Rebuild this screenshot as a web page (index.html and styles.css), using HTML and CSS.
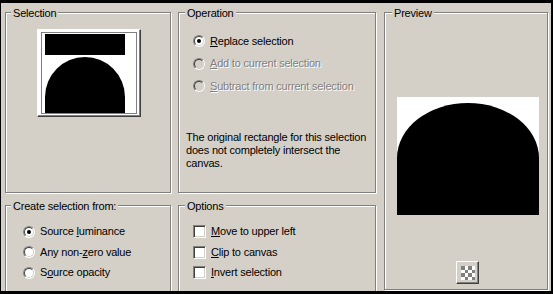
FILE: index.html
```html
<!DOCTYPE html>
<html>
<head>
<meta charset="utf-8">
<link rel="stylesheet" href="styles.css">
</head>
<body>
<div class="dialog">
  <div class="group sel">
    <span class="legend">Selection</span>
    <div class="thumb">
      <svg width="101" height="85" viewBox="0 0 101 85">
        <rect x="0" y="0" width="101" height="85" fill="#fff"/>
        <rect x="7" y="4" width="80" height="21" fill="#000"/>
        <path d="M7 83 V67 A40 40 0 0 1 87 67 V83 Z" fill="#000"/>
        <rect x="3.5" y="2.5" width="95" height="81" fill="none" stroke="#000" stroke-width="1" stroke-dasharray="1 1"/>
      </svg>
    </div>
  </div>

  <div class="group op">
    <span class="legend op-legend">Operation</span>
    <div class="op-rows">
      <div class="row row-op"><span class="radio checked"></span><span class="lbl"><u>R</u>eplace selection</span></div>
      <div class="row row-op disabled"><span class="radio"></span><span class="lbl"><u>A</u>dd to current selection</span></div>
      <div class="row row-op disabled"><span class="radio"></span><span class="lbl"><u>S</u>ubtract from current selection</span></div>
    </div>
    <p class="info">The original rectangle for this selection<br>does not completely intersect the<br>canvas.</p>
  </div>

  <div class="group preview">
    <span class="legend pv-legend">Preview</span>
    <div class="pv-box">
      <svg width="142" height="118" viewBox="0 0 142 118">
        <path d="M0 118 V61 A71 55 0 0 1 142 61 V118 Z" fill="#000"/>
      </svg>
    </div>
    <div class="pv-btn">
      <svg width="14" height="14" viewBox="0 0 4 4" shape-rendering="crispEdges">
        <rect x="0" y="0" width="4" height="4" fill="#fff"/>
        <rect x="0" y="0" width="1" height="1" fill="#808080"/>
        <rect x="2" y="0" width="1" height="1" fill="#808080"/>
        <rect x="1" y="1" width="1" height="1" fill="#808080"/>
        <rect x="3" y="1" width="1" height="1" fill="#808080"/>
        <rect x="0" y="2" width="1" height="1" fill="#808080"/>
        <rect x="2" y="2" width="1" height="1" fill="#808080"/>
        <rect x="1" y="3" width="1" height="1" fill="#808080"/>
        <rect x="3" y="3" width="1" height="1" fill="#808080"/>
      </svg>
    </div>
  </div>

  <div class="group create">
    <span class="legend">Create selection from:</span>
    <div class="list-rows create-rows">
      <div class="row row-sm"><span class="radio checked"></span><span class="lbl">Source <u>l</u>uminance</span></div>
      <div class="row row-sm"><span class="radio"></span><span class="lbl">Any non-<u>z</u>ero value</span></div>
      <div class="row row-sm"><span class="radio"></span><span class="lbl">S<u>o</u>urce opacity</span></div>
    </div>
  </div>

  <div class="group options">
    <span class="legend op-legend">Options</span>
    <div class="list-rows opt-rows">
      <div class="row row-sm"><span class="check"></span><span class="lbl"><u>M</u>ove to upper left</span></div>
      <div class="row row-sm"><span class="check"></span><span class="lbl"><u>C</u>lip to canvas</span></div>
      <div class="row row-sm"><span class="check"></span><span class="lbl"><u>I</u>nvert selection</span></div>
    </div>
  </div>
</div>
</body>
</html>
```

FILE: styles.css
```css
html, body {
  margin: 0;
  padding: 0;
  background: #000;
}

body {
  width: 553px;
  height: 294px;
  overflow: hidden;
  font-family: "Liberation Sans", Arial, sans-serif;
  font-size: 11px;
  line-height: 13px;
  letter-spacing: -0.2px;
  color: #000;
}

.dialog {
  margin: 3px 0 0 1px;
  width: 550px;
  height: 288px;
  box-sizing: border-box;
  padding: 9px 0 0 4px;
  background: #d4d0c8;
  overflow: hidden;
  display: grid;
  grid-template-columns: 166px 198px 165px;
  grid-template-rows: 181px 85px;
  column-gap: 7px;
  row-gap: 12px;
  align-items: start;
}

.group {
  position: relative;
  box-sizing: border-box;
  border: 1px solid #808080;
  box-shadow: inset 1px 1px #fff, 1px 1px #fff;
  height: 100%;
}

.legend {
  position: absolute;
  top: -6px;
  left: 5px;
  padding: 0 2px;
  background: #d4d0c8;
  white-space: nowrap;
}

.op-legend { left: 6px; }
.pv-legend { left: 7px; }

.sel { grid-column: 1; grid-row: 1; }
.op { grid-column: 2; grid-row: 1; }
.preview {
  grid-column: 3;
  grid-row: 1 / 3;
  justify-self: end;
  width: 164px;
  height: 278px;
}
.create { grid-column: 1; grid-row: 2; height: 100px; }
.options { grid-column: 2; grid-row: 2; height: 100px; }

/* Selection thumbnail button */
.thumb {
  margin: 16px 0 0 31px;
  width: 104px;
  height: 88px;
  box-sizing: border-box;
  border: 1px solid;
  border-color: #fff #404040 #404040 #fff;
  box-shadow: inset -1px -1px #808080;
  background: #fff;
  display: flex;
  align-items: flex-start;
  justify-content: flex-start;
}
.thumb svg { display: block; }

/* Rows */
.row {
  display: flex;
  align-items: center;
  gap: 5px;
  white-space: nowrap;
}
.row-op { height: 22.5px; }
.row-sm { height: 20.5px; }

.op-rows { margin: 17px 0 0 14px; }
.create-rows { margin: 15.5px 0 0 17px; }
.opt-rows { margin: 15.5px 0 0 14px; }

.disabled .lbl {
  color: #808080;
  text-shadow: 1px 1px 0 #fff;
}

u { text-decoration: underline; }

.info {
  margin: 33px 0 0 7px;
  line-height: 13px;
}

/* Radio */
.radio {
  flex: none;
  position: relative;
  width: 12px;
  height: 12px;
  box-sizing: border-box;
  border-radius: 50%;
  border: 1px solid;
  border-color: #808080 #fff #fff #808080;
  background: #fff;
}
.radio::before {
  content: "";
  position: absolute;
  inset: 0;
  border-radius: 50%;
  border: 1px solid;
  border-color: #404040 #d4d0c8 #d4d0c8 #404040;
}
.radio.checked::after {
  content: "";
  position: absolute;
  left: 3px;
  top: 3px;
  width: 4px;
  height: 4px;
  border-radius: 50%;
  background: #000;
}
.disabled .radio { background: #d4d0c8; }

/* Checkbox */
.check {
  flex: none;
  width: 13px;
  height: 13px;
  box-sizing: border-box;
  border: 1px solid;
  border-color: #808080 #fff #fff #808080;
  background: #fff;
  box-shadow: inset 1px 1px #404040, inset -1px -1px #d4d0c8;
}

/* Preview */
.pv-box {
  margin: 84px 0 0 12px;
  width: 142px;
  height: 118px;
  background: #fff;
}
.pv-box svg { display: block; }

.pv-btn {
  margin: 46px 0 0 71px;
  width: 23px;
  height: 23px;
  box-sizing: border-box;
  border: 1px solid;
  border-color: #fff #404040 #404040 #fff;
  box-shadow: inset -1px -1px #808080;
  background: #d4d0c8;
  display: flex;
  align-items: center;
  justify-content: center;
}
.pv-btn svg { display: block; }
```
